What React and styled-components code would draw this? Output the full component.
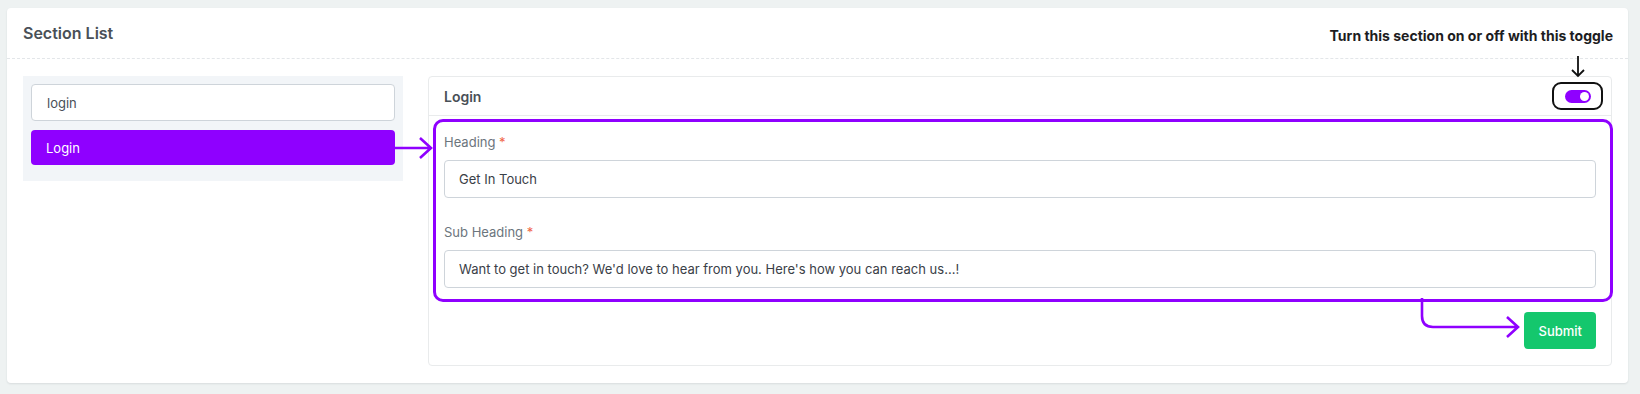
import React, { useState } from 'react'
import styled, { createGlobalStyle } from 'styled-components'

const Global = createGlobalStyle`
  * { box-sizing: border-box; }
  body {
    margin: 0;
    background: #eef2f2;
    font-family: Inter, "Noto Sans", sans-serif;
    color: #495057;
  }
`

const Page = styled.div`
  padding: 8px 12px 13px 7px;
`

const Card = styled.div`
  background: #fff;
  border-radius: 4px;
  box-shadow: 0 1px 2px rgba(56, 65, 74, 0.12);
`

const CardHeader = styled.div`
  height: 51px;
  display: flex;
  align-items: center;
  justify-content: space-between;
  padding: 0 15px 0 16px;
  border-bottom: 1px dashed #e3e6e9;
`

const Title = styled.h4`
  margin: 0;
  font-size: 16px;
  font-weight: 600;
  color: #495057;
`

const Hint = styled.span`
  margin-top: 4px;
  font-size: 14px;
  font-weight: 700;
  color: #1d1d1f;
`

const Body = styled.div`
  display: grid;
  grid-template-columns: 380px 1fr;
  gap: 25px;
  padding: 17px 16px 17px 16px;
  align-items: start;
`

const ListPanel = styled.div`
  background: #f2f5f8;
  padding: 8px 8px 16px 8px;
  display: flex;
  flex-direction: column;
  gap: 9px;
`

const Search = styled.input`
  height: 37px;
  width: 100%;
  border: 1px solid #ced4da;
  border-radius: 4px;
  padding: 0 15px;
  font-family: inherit;
  font-size: 13px;
  color: #495057;
  background: #fff;
  outline: none;
`

const ListItem = styled.div`
  height: 35px;
  display: flex;
  align-items: center;
  padding: 0 15px;
  border-radius: 4px;
  font-size: 13px;
  background: ${p => (p.$active ? '#8f00ff' : 'transparent')};
  color: ${p => (p.$active ? '#fff' : '#495057')};
`

const Panel = styled.div`
  border: 1px solid #e9ebec;
  border-radius: 4px;
  background: #fff;
`

const PanelHeader = styled.div`
  height: 39px;
  display: flex;
  align-items: center;
  justify-content: space-between;
  padding: 0 8px 0 15px;
  border-bottom: 1px solid #e9ebec;
`

const PanelTitle = styled.h5`
  margin: 0;
  font-size: 14px;
  font-weight: 600;
  color: #495057;
`

const ToggleFrame = styled.div`
  position: relative;
  width: 51px;
  height: 28px;
  border: 2px solid #111;
  border-radius: 9px;
  display: flex;
  align-items: center;
  justify-content: center;
`

const DownArrow = styled.svg`
  position: absolute;
  left: 50%;
  bottom: 100%;
  margin-bottom: 6px;
  transform: translateX(-50%);
`

const Switch = styled.button`
  width: 26px;
  height: 13px;
  border: none;
  padding: 0;
  border-radius: 7px;
  background: ${p => (p.$on ? '#8f00ff' : '#ced4da')};
  position: relative;
  cursor: pointer;

  &::after {
    content: '';
    position: absolute;
    top: 2px;
    left: ${p => (p.$on ? '15px' : '2px')};
    width: 9px;
    height: 9px;
    border-radius: 50%;
    background: #fff;
  }
`

const Form = styled.div`
  padding: 16px 15px 16px 15px;
`

const Fields = styled.div`
  position: relative;
`

const Highlight = styled.div`
  position: absolute;
  top: -13px;
  left: -11px;
  right: -17px;
  bottom: -14px;
  border: 3px solid #8f00ff;
  border-radius: 10px;
  pointer-events: none;
`

const SideArrow = styled.svg`
  position: absolute;
  left: -42px;
  top: 14px;
`

const BendArrow = styled.svg`
  position: absolute;
  right: 88px;
  top: 100%;
  margin-top: -1px;
`

const Group = styled.div`
  margin-bottom: ${p => (p.$last ? '0' : '24px')};
`

const Label = styled.label`
  display: block;
  font-size: 13px;
  line-height: 20px;
  color: #6c757d;
  margin-bottom: 8px;

  span {
    color: #f06548;
  }
`

const Field = styled.input`
  width: 100%;
  height: 38px;
  border: 1px solid #ced4da;
  border-radius: 4px;
  padding: 0 14px;
  font-family: inherit;
  font-size: 13px;
  color: #3a4047;
  background: #fff;
  outline: none;
`

const Actions = styled.div`
  display: flex;
  justify-content: flex-end;
  margin-top: 24px;
`

const Submit = styled.button`
  height: 37px;
  padding: 0 14px;
  border: none;
  border-radius: 4px;
  background: #14c76d;
  color: #fff;
  font-family: inherit;
  font-size: 13px;
  font-weight: 500;
  cursor: pointer;
`

export default function App() {
  const [on, setOn] = useState(true)
  const [heading, setHeading] = useState('Get In Touch')
  const [sub, setSub] = useState("Want to get in touch? We'd love to hear from you. Here's how you can reach us...!")

  return (
    <>
      <Global />
      <Page>
        <Card>
          <CardHeader>
            <Title>Section List</Title>
            <Hint>Turn this section on or off with this toggle</Hint>
          </CardHeader>
          <Body>
            <ListPanel>
              <Search defaultValue="login" />
              <ListItem $active>Login</ListItem>
            </ListPanel>
            <Panel>
              <PanelHeader>
                <PanelTitle>Login</PanelTitle>
                <ToggleFrame>
                  <DownArrow width="14" height="22" viewBox="0 0 14 22">
                    <path d="M7 0 V20 M1 14 L7 20 L13 14" fill="none" stroke="#111" strokeWidth="1.8" />
                  </DownArrow>
                  <Switch $on={on} onClick={() => setOn(!on)} />
                </ToggleFrame>
              </PanelHeader>
              <Form>
                <Fields>
                  <Highlight>
                    <SideArrow width="40" height="24" viewBox="0 0 40 24">
                      <path d="M0 12 H37 M26 2 L37 12 L26 22" fill="none" stroke="#8f00ff" strokeWidth="2.6" />
                    </SideArrow>
                    <BendArrow width="104" height="44" viewBox="0 0 104 44">
                      <path d="M4 0 V18 Q4 29 15 29 H100 M89 19 L100 29 L89 39" fill="none" stroke="#8f00ff" strokeWidth="2.6" />
                    </BendArrow>
                  </Highlight>
                  <Group>
                    <Label>Heading <span>*</span></Label>
                    <Field value={heading} onChange={e => setHeading(e.target.value)} />
                  </Group>
                  <Group $last>
                    <Label>Sub Heading <span>*</span></Label>
                    <Field value={sub} onChange={e => setSub(e.target.value)} />
                  </Group>
                </Fields>
                <Actions>
                  <Submit>Submit</Submit>
                </Actions>
              </Form>
            </Panel>
          </Body>
        </Card>
      </Page>
    </>
  )
}
